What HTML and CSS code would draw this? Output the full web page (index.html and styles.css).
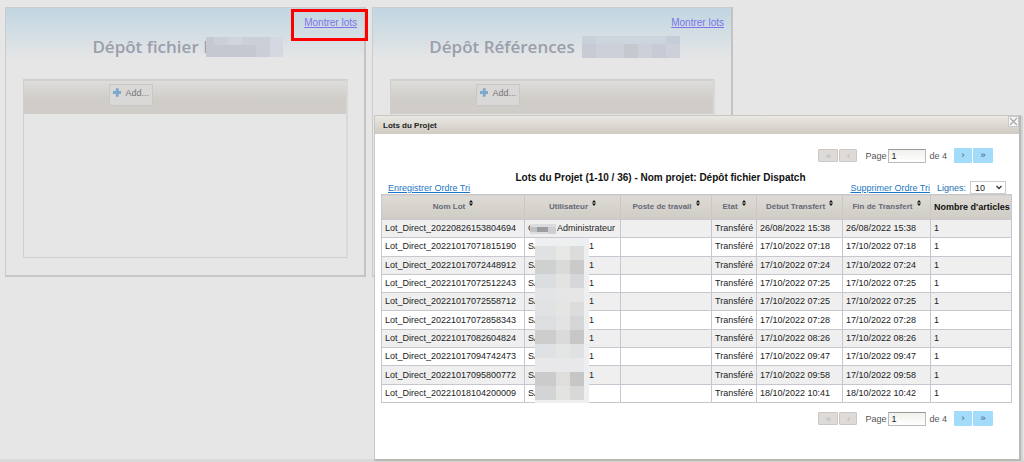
FILE: index.html
```html
<!DOCTYPE html>
<html lang="fr">
<head>
<meta charset="utf-8">
<title>Lots du Projet</title>
<link rel="stylesheet" href="styles.css">
</head>
<body>
<main class="cards">
  <section class="card">
    <div class="card-top"><a class="card-link marked" href="#">Montrer lots</a></div>
    <h2 class="card-title">Dépôt fichier D
      <svg class="mask-over" width="77" height="20" viewBox="0 0 77 20" aria-hidden="true"><rect width="77" height="20" fill="#cbced7"/><rect width="8" height="8" fill="#c5c9d1"/><rect x="8" width="14" height="8" fill="#cbd0d8"/><rect x="22" width="14" height="8" fill="#d0d5dd"/><rect x="36" width="28" height="8" fill="#cbd0d8"/><rect x="64" width="13" height="20" fill="#d5d8e0"/><rect y="8" width="50" height="12" fill="#c6c8d1"/></svg>
    </h2>
    <div class="uploader">
      <div class="toolbar"><button class="add" type="button"><svg width="9" height="9" viewBox="0 0 9 9" aria-hidden="true"><path d="M3 0h3v3h3v3H6v3H3V6H0V3h3z" fill="#7ba8cd"/></svg>Add...</button></div>
    </div>
  </section>
  <section class="card">
    <div class="card-top"><a class="card-link" href="#">Montrer lots</a></div>
    <h2 class="card-title">Dépôt Références
      <svg width="98" height="22" viewBox="0 0 98 22" aria-hidden="true"><rect width="98" height="22" fill="#cdd0d8"/><rect width="14" height="8" fill="#c8d0d9"/><rect x="14" width="70" height="8" fill="#ccd4dd"/><rect x="84" width="14" height="8" fill="#c5cdd8"/><rect y="8" width="14" height="14" fill="#c8cad6"/><rect x="42" y="8" width="14" height="14" fill="#c6c8d0"/><rect x="70" y="8" width="14" height="14" fill="#c8cad6"/></svg>
    </h2>
    <div class="uploader">
      <div class="toolbar"><button class="add" type="button"><svg width="9" height="9" viewBox="0 0 9 9" aria-hidden="true"><path d="M3 0h3v3h3v3H6v3H3V6H0V3h3z" fill="#7ba8cd"/></svg>Add...</button></div>
    </div>
  </section>
</main>

<div class="dialog" role="dialog" aria-labelledby="dialog-title">
  <header class="dialog-head">
    <h1 id="dialog-title" class="dialog-title">Lots du Projet</h1>
    <button class="close" type="button" aria-label="Fermer"><svg width="9" height="9" viewBox="0 0 9 9" aria-hidden="true"><path d="M1 1l7 7M8 1L1 8" stroke="#aaa" stroke-width="1.4"/></svg></button>
  </header>
  <div class="dialog-body">
    <nav class="pager" aria-label="Pagination haut">
      <button class="pg off" type="button" disabled>«</button><button class="pg off narrow" type="button" disabled>‹</button>
      <label class="page-label" for="page-top">Page</label><input class="page-input" id="page-top" type="text" value="1"><span class="page-total">de 4</span>
      <button class="pg narrow" type="button">›</button><button class="pg" type="button">»</button>
    </nav>
    <h2 class="list-title">Lots du Projet (1-10 / 36) - Nom projet: Dépôt fichier Dispatch</h2>
    <div class="tools">
      <a class="tool-link" href="#">Enregistrer Ordre Tri</a>
      <a class="tool-link end" href="#">Supprimer Ordre Tri</a>
      <label class="lines-label" for="lines">Lignes:</label>
      <span class="select-box"><select class="lines" id="lines"><option>10</option></select><svg class="chevron" width="6" height="5" viewBox="0 0 6 5" aria-hidden="true"><path d="M.5 1L3 3.5 5.5 1" fill="none" stroke="#333" stroke-width="1.3"/></svg></span>
    </div>
    <div class="table-wrap">
      <table class="lots">
        <colgroup><col class="c-lot"><col class="c-user"><col class="c-post"><col class="c-state"><col class="c-start"><col class="c-end"><col class="c-count"></colgroup>
        <thead><tr>
          <th>Nom Lot<svg class="sort" viewBox="0 0 4 6"><path d="M0 2.5L2 0l2 2.5zM0 3.5h4L2 6z"/></svg></th>
          <th>Utilisateur<svg class="sort" viewBox="0 0 4 6"><path d="M0 2.5L2 0l2 2.5zM0 3.5h4L2 6z"/></svg></th>
          <th>Poste de travail<svg class="sort" viewBox="0 0 4 6"><path d="M0 2.5L2 0l2 2.5zM0 3.5h4L2 6z"/></svg></th>
          <th>Etat<svg class="sort" viewBox="0 0 4 6"><path d="M0 2.5L2 0l2 2.5zM0 3.5h4L2 6z"/></svg></th>
          <th>Début Transfert<svg class="sort" viewBox="0 0 4 6"><path d="M0 2.5L2 0l2 2.5zM0 3.5h4L2 6z"/></svg></th>
          <th>Fin de Transfert<svg class="sort" viewBox="0 0 4 6"><path d="M0 2.5L2 0l2 2.5zM0 3.5h4L2 6z"/></svg></th>
          <th class="plain">Nombre d'articles</th>
        </tr></thead>
        <tbody>
          <tr><td>Lot_Direct_20220826153804694</td><td><span class="user">G<svg class="name-mask" width="26" height="10" viewBox="0 0 26 10" aria-hidden="true"><rect width="26" height="10" fill="#dcdcde"/><rect y="3" width="7" height="5" fill="#c0c2c4"/><rect x="7" y="3" width="11" height="5" fill="#9b9da1"/><rect x="18" y="3" width="8" height="7" fill="#cfcdd2"/></svg>Administrateur</span></td><td></td><td>Transféré</td><td>26/08/2022 15:38</td><td>26/08/2022 15:38</td><td>1</td></tr>
          <tr><td>Lot_Direct_20221017071815190</td><td><span class="user wide">SA<span>1</span></span></td><td></td><td>Transféré</td><td>17/10/2022 07:18</td><td>17/10/2022 07:18</td><td>1</td></tr>
          <tr><td>Lot_Direct_20221017072448912</td><td><span class="user wide">SA<span>1</span></span></td><td></td><td>Transféré</td><td>17/10/2022 07:24</td><td>17/10/2022 07:24</td><td>1</td></tr>
          <tr><td>Lot_Direct_20221017072512243</td><td><span class="user wide">SA<span>1</span></span></td><td></td><td>Transféré</td><td>17/10/2022 07:25</td><td>17/10/2022 07:25</td><td>1</td></tr>
          <tr><td>Lot_Direct_20221017072558712</td><td><span class="user wide">SA<span>1</span></span></td><td></td><td>Transféré</td><td>17/10/2022 07:25</td><td>17/10/2022 07:25</td><td>1</td></tr>
          <tr><td>Lot_Direct_20221017072858343</td><td><span class="user wide">SA<span>1</span></span></td><td></td><td>Transféré</td><td>17/10/2022 07:28</td><td>17/10/2022 07:28</td><td>1</td></tr>
          <tr><td>Lot_Direct_20221017082604824</td><td><span class="user wide">SA<span>1</span></span></td><td></td><td>Transféré</td><td>17/10/2022 08:26</td><td>17/10/2022 08:26</td><td>1</td></tr>
          <tr><td>Lot_Direct_20221017094742473</td><td><span class="user wide">SA<span>1</span></span></td><td></td><td>Transféré</td><td>17/10/2022 09:47</td><td>17/10/2022 09:47</td><td>1</td></tr>
          <tr><td>Lot_Direct_20221017095800772</td><td><span class="user wide">SA<span>1</span></span></td><td></td><td>Transféré</td><td>17/10/2022 09:58</td><td>17/10/2022 09:58</td><td>1</td></tr>
          <tr><td>Lot_Direct_20221018104200009</td><td><span class="user wide">SA</span></td><td></td><td>Transféré</td><td>18/10/2022 10:41</td><td>18/10/2022 10:42</td><td>1</td></tr>
        </tbody>
      </table>
      <svg class="column-mask" width="54" height="165" viewBox="0 0 54 165" aria-hidden="true">
        <rect width="54" height="165" fill="#eeeff1"/>
        <rect y="8" width="21" height="14" fill="#e0e1e2"/><rect x="21" y="8" width="14" height="14" fill="#e8e8e7"/><rect x="35" y="8" width="14" height="14" fill="#dcdcdd"/>
        <rect y="22" width="21" height="14" fill="#cfd0d0"/><rect x="21" y="22" width="14" height="14" fill="#dadad9"/><rect x="35" y="22" width="14" height="14" fill="#cacaca"/>
        <rect y="36" width="21" height="14" fill="#dbdee0"/><rect x="21" y="36" width="14" height="14" fill="#e3e4e2"/><rect x="35" y="36" width="14" height="14" fill="#d6d7da"/>
        <rect y="50" width="21" height="14" fill="#e3e4e6"/><rect x="21" y="50" width="28" height="14" fill="#e6e6e6"/>
        <rect y="64" width="21" height="14" fill="#e1e2e3"/><rect x="21" y="64" width="14" height="14" fill="#e5e5e4"/><rect x="35" y="64" width="14" height="14" fill="#dcdcdd"/>
        <rect y="78" width="21" height="14" fill="#dcdedf"/><rect x="21" y="78" width="14" height="14" fill="#e3e3e3"/><rect x="35" y="78" width="14" height="14" fill="#d5d5d6"/>
        <rect y="92" width="21" height="14" fill="#cdcdce"/><rect x="21" y="92" width="14" height="14" fill="#dadada"/><rect x="35" y="92" width="14" height="14" fill="#c7c7c8"/>
        <rect y="106" width="21" height="14" fill="#dfe2e4"/><rect x="21" y="106" width="14" height="14" fill="#e4e6e6"/><rect x="35" y="106" width="14" height="14" fill="#dfe1e3"/>
        <rect y="120" width="49" height="14" fill="#e8e8ea"/>
        <rect y="134" width="21" height="14" fill="#cbcbcc"/><rect x="21" y="134" width="14" height="14" fill="#dfdedc"/><rect x="35" y="134" width="14" height="14" fill="#c6c6c7"/>
        <rect y="148" width="21" height="14" fill="#d3d4d5"/><rect x="21" y="148" width="14" height="14" fill="#e3e3e2"/><rect x="35" y="148" width="14" height="14" fill="#d8d8d9"/>
      </svg>
    </div>
    <nav class="pager" aria-label="Pagination bas">
      <button class="pg off" type="button" disabled>«</button><button class="pg off narrow" type="button" disabled>‹</button>
      <label class="page-label" for="page-bottom">Page</label><input class="page-input" id="page-bottom" type="text" value="1"><span class="page-total">de 4</span>
      <button class="pg narrow" type="button">›</button><button class="pg" type="button">»</button>
    </nav>
  </div>
</div>
</body>
</html>
```
FILE: styles.css
```css
* { box-sizing: border-box; }
html { height: 100%; }
body {
  margin: 0;
  min-height: 100%;
  padding: 7px 5px;
  background: #e6e6e6;
  border-bottom: 3px solid #dadada;
  font-family: "Liberation Sans", Arial, sans-serif;
  font-size: 9px;
  color: #222;
}
button, input, select { font: inherit; margin: 0; }

.cards { display: grid; grid-template-columns: 361px 361px; gap: 6px; }
.card {
  display: flex;
  flex-direction: column;
  min-height: 270px;
  padding: 9px 16px 17px 17px;
  border: 1px solid #cbcbcb;
  border-right: 2px solid #c3c3c3;
  border-bottom: 2px solid #c6c6c6;
  background: linear-gradient(#c1d6e2, #e6e6e6 52px);
}
.card-top { display: flex; justify-content: flex-end; margin-right: -9px; }
.card-link { position: relative; font-size: 10px; line-height: 12px; color: #7a74e8; }
.marked::after {
  content: "";
  position: absolute;
  inset: -8px -11px -12px -13px;
  border: 3px solid #f00;
}
.card-title {
  display: flex;
  justify-content: center;
  align-items: center;
  gap: 7px;
  margin: 0 0 15px;
  padding-left: 4px;
  height: 35px;
  font: 600 17px/24px "Open Sans", sans-serif;
  color: #9b9eab;
}
.mask-over { margin-left: -17px; }
.uploader { flex: 1; border: 1px solid #cfcfcf; border-right: 2px solid #d8d8d8; }
.toolbar {
  height: 34px;
  padding: 3px 0 0 85px;
  border-top: 1px solid #d0d0d0;
  background: linear-gradient(#dedddb, #d0cdc8 18px);
}
.add {
  display: flex;
  align-items: flex-start;
  gap: 4px;
  width: 44px;
  height: 22px;
  padding: 3px;
  border: 1px solid #c8c8c6;
  background: #d9d8d6;
  line-height: 10px;
  color: #777;
}

.dialog {
  position: absolute;
  top: 115px;
  right: 3px;
  width: 647px;
  border: 1px solid #cbc8c2;
  border-right: 2px solid #bab8b4;
  border-bottom: 2px solid #bcbab4;
  background: #fff;
  box-shadow: 2px 1px 0 #d4d4d4;
}
.dialog-head {
  display: flex;
  justify-content: space-between;
  height: 18px;
  padding-left: 8px;
  background: linear-gradient(#eae8e3, #cfcbc3);
}
.dialog-title { margin: 0; font-size: 8px; line-height: 19px; }
.close {
  display: grid;
  place-items: center;
  width: 11px;
  height: 11px;
  padding: 0;
  border: 1px solid #c8c8c8;
  background: #f8f8f8;
}
.dialog-body { padding: 14px 7px 33px 6px; }
.pager { display: flex; align-items: center; justify-content: flex-end; height: 15px; margin-right: 19px; color: #555; }
.pg {
  width: 20px;
  height: 15px;
  margin-left: 1px;
  padding: 0;
  border: 0;
  border-radius: 1px;
  background: #a3dbfb;
  line-height: 13px;
  color: #456;
}
.pg.narrow { width: 18px; }
.pg.off { height: 13px; border: 1px solid #cbc7c5; background: #dedad7; line-height: 10px; color: #b6b1b0; }
.page-label { margin-left: 8px; }
.page-input {
  width: 38px;
  height: 14px;
  margin: 0 3px 0 2px;
  padding: 0 2px;
  border: 1px solid #bbb;
  border-top-color: #999;
  background: linear-gradient(#f0f0ec, #fff);
  color: #222;
}
.page-total { margin-right: 6px; }
.list-title { margin: 9px 0 0; padding-right: 72px; text-align: center; font-size: 10px; line-height: 12px; color: #111; }
.tools { display: flex; align-items: flex-end; height: 10px; padding: 0 6px 0 7px; line-height: 12px; color: #1d6db5; }
.tool-link { color: #1d76c4; }
.end { margin-left: auto; }
.lines-label { margin: 0 4px 0 7px; }
.select-box { position: relative; display: flex; }
.lines {
  appearance: none;
  width: 36px;
  height: 13px;
  padding: 0 4px;
  border: 1px solid #ccc;
  border-radius: 0;
  background: #fff;
  color: #222;
}
.chevron { position: absolute; right: 4px; top: 4px; }

.table-wrap { position: relative; margin-bottom: 8px; }
.lots { width: 100%; height: 209px; table-layout: fixed; border-collapse: collapse; }
.c-lot { width: 143px; }
.c-user { width: 96px; }
.c-post { width: 91px; }
.c-state { width: 45px; }
.c-start { width: 86px; }
.c-end { width: 88px; }
.lots th, .lots td { border: 1px solid #c8c7d0; padding: 0 3px; white-space: nowrap; }
.lots th {
  height: 25px;
  background: linear-gradient(#dedbd6, #cfccc5);
  font-size: 8px;
  line-height: 14px;
  color: #676878;
}
.lots th.plain { font-size: 9px; color: #111; }
.sort { width: 4px; height: 6px; margin-left: 4px; vertical-align: 3px; fill: #111; }
.lots td { text-align: left; line-height: 11px; }
.lots tbody tr:nth-child(odd) { background: #efefef; }
.user { display: flex; align-items: center; }
.name-mask { margin: 0 1px 0 -5px; }
.wide { justify-content: space-between; width: 66px; }
.column-mask { position: absolute; left: 154px; top: 44px; }
```
